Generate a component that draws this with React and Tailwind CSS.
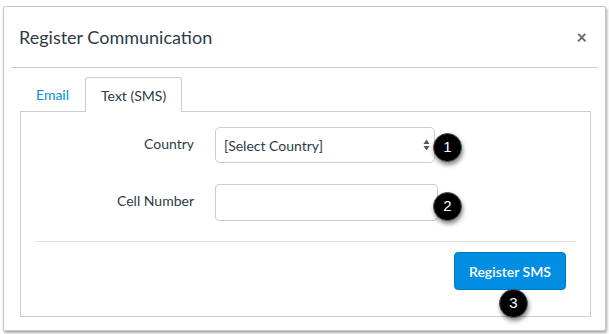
import React from "react";

function Badge({ n, className }) {
  return (
    <div
      className={
        "absolute w-[29px] h-[29px] rounded-full bg-black text-white flex items-center justify-center text-[15px] font-['Liberation_Sans',sans-serif] shadow-[1px_3px_4px_rgba(0,0,0,0.45)] border border-[#555] " +
        className
      }
    >
      {n}
    </div>
  );
}

export default function App() {
  return (
    <div className="relative w-[609px] h-[334px] bg-white pt-[6px] pl-[3px] font-['Lato','Liberation_Sans',sans-serif] text-[#2d3b45]">
      <div className="w-[603px] h-[325px] bg-white border border-[#c4c9cc] rounded-[2px] shadow-[1px_2px_3px_rgba(0,0,0,0.35)]">
        <div className="h-[60px] flex items-center justify-between pl-[15px] pr-[18px]">
          <h2 className="text-[18px] leading-none">Register Communication</h2>
          <span className="text-[#666] text-[18px] leading-none font-bold">×</span>
        </div>
        <div className="mx-[7px] h-px bg-[#c7cdd1]" />
        <div className="pl-[16px] pr-[14px] pt-[9px]">
          <div className="flex items-end h-[34px]">
            <div className="px-[16px] h-[34px] flex items-center text-[14px] text-[#008ee2]">Email</div>
            <div className="relative z-10 px-[15px] h-[35px] -mb-px flex items-center text-[14px] bg-white border border-b-0 border-[#c7cdd1] rounded-t-[3px]">
              Text (SMS)
            </div>
          </div>
          <div className="h-[206px] border border-[#c7cdd1] px-[14px] pt-[15px]">
            <div className="flex items-center">
              <div className="w-[159px] text-right text-[14px] pb-[4px]">Country</div>
              <div className="ml-[21px] w-[220px] h-[36px] border border-[#c7cdd1] rounded-[5px] flex items-center justify-between pl-[8px] pr-[4px] text-[14px]">
                <span>[Select Country]</span>
                <svg width="7" height="12" viewBox="0 0 7 12">
                  <path d="M3.5 0.5 L6.5 5 L0.5 5 Z" fill="#555" />
                  <path d="M3.5 11.5 L6.5 7 L0.5 7 Z" fill="#555" />
                </svg>
              </div>
            </div>
            <div className="flex items-center mt-[21px]">
              <div className="w-[159px] text-right text-[14px] pb-[4px]">Cell Number</div>
              <div className="ml-[21px] w-[223px] h-[37px] border border-[#c7cdd1] rounded-[4px]" />
            </div>
            <div className="h-px bg-[#dde1e3] mt-[20px]" />
            <div className="flex justify-end pt-[10px] pr-[10px]">
              <button className="w-[112px] h-[38px] rounded-[4px] bg-[#008ee2] border border-[#0079c1] text-white text-[14px] font-semibold">
                Register SMS
              </button>
            </div>
          </div>
        </div>
      </div>
      <Badge n="1" className="left-[433px] top-[133px]" />
      <Badge n="2" className="left-[433px] top-[192px]" />
      <Badge n="3" className="left-[499px] top-[289px]" />
    </div>
  );
}
